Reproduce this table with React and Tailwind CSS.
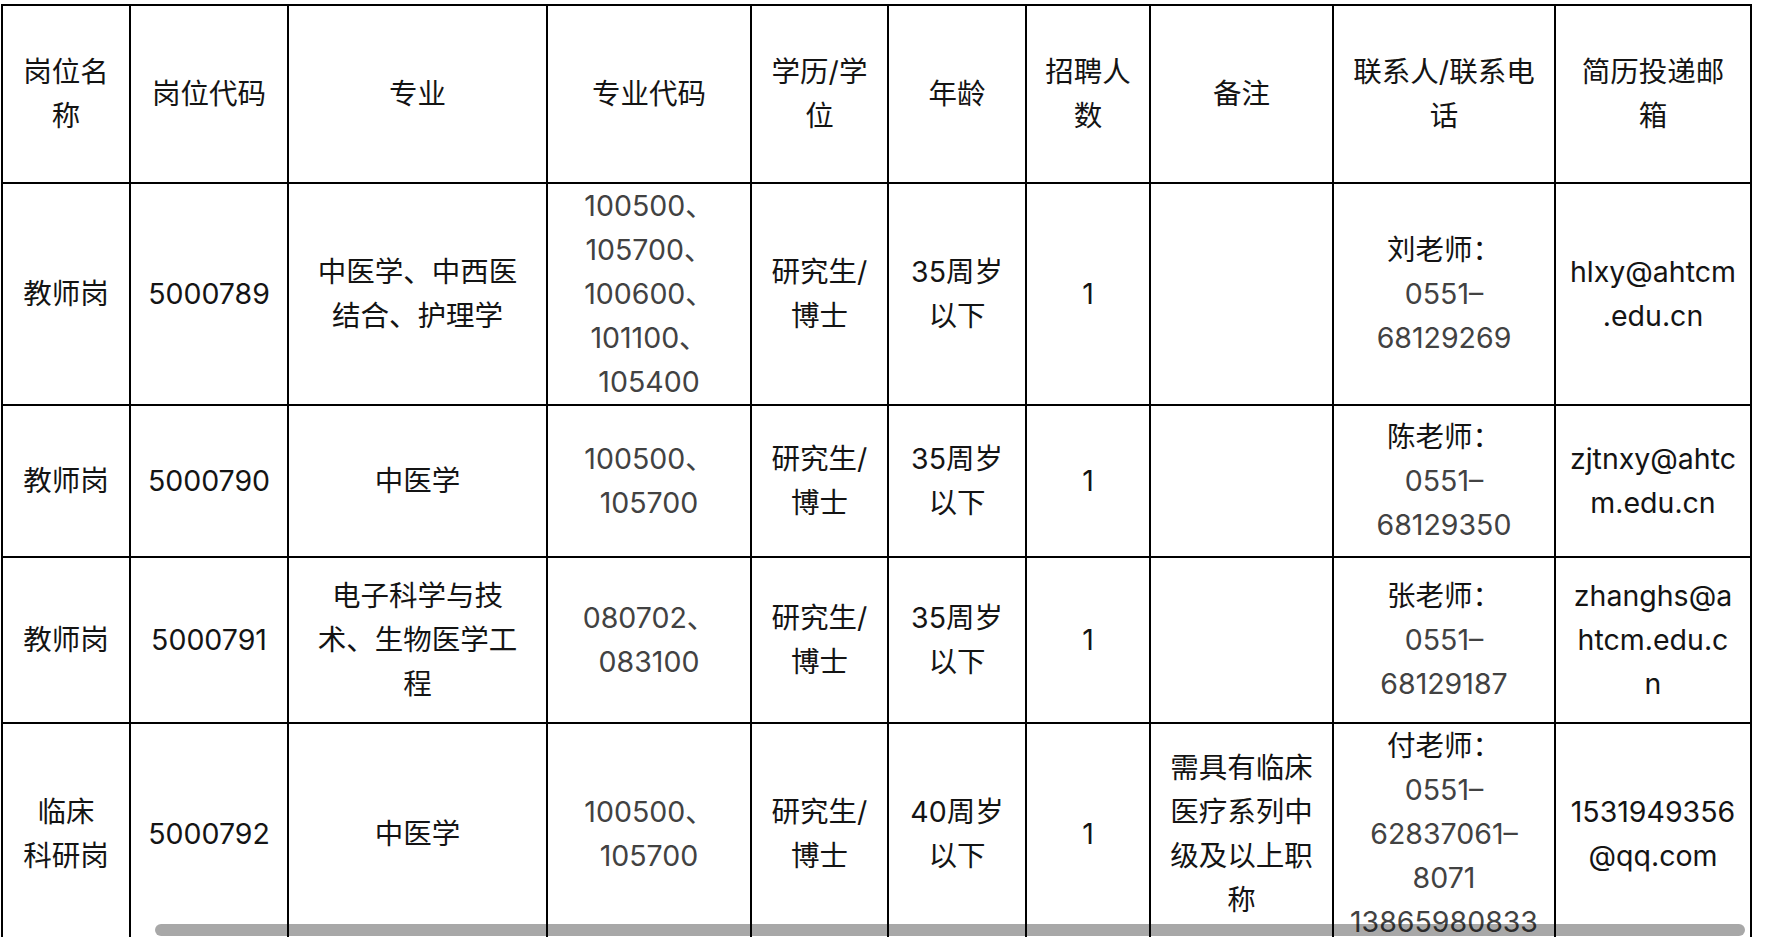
const columns = [128, 158, 259, 204, 137, 138, 124, 183, 222, 196]

const header = [
  ['岗位名', '称'],
  ['岗位代码'],
  ['专业'],
  ['专业代码'],
  ['学历/学', '位'],
  ['年龄'],
  ['招聘人', '数'],
  ['备注'],
  ['联系人/联系电', '话'],
  ['简历投递邮', '箱'],
]

// each cell: lines, plus which of them are the grey number lines
const rows = [
  {
    height: 221,
    cells: [
      { lines: ['教师岗'] },
      { lines: ['5000789'] },
      { lines: ['中医学、中西医', '结合、护理学'] },
      { lines: ['100500、', '105700、', '100600、', '101100、', '105400'], grey: true },
      { lines: ['研究生/', '博士'] },
      { lines: ['35周岁', '以下'] },
      { lines: ['1'] },
      { lines: [] },
      { lines: ['刘老师：', '0551–', '68129269'], greyFrom: 1 },
      { lines: ['hlxy@ahtcm', '.edu.cn'] },
    ],
  },
  {
    height: 152,
    cells: [
      { lines: ['教师岗'] },
      { lines: ['5000790'] },
      { lines: ['中医学'] },
      { lines: ['100500、', '105700'], grey: true },
      { lines: ['研究生/', '博士'] },
      { lines: ['35周岁', '以下'] },
      { lines: ['1'] },
      { lines: [] },
      { lines: ['陈老师：', '0551–', '68129350'], greyFrom: 1 },
      { lines: ['zjtnxy@ahtc', 'm.edu.cn'] },
    ],
  },
  {
    height: 166,
    cells: [
      { lines: ['教师岗'] },
      { lines: ['5000791'] },
      { lines: ['电子科学与技', '术、生物医学工', '程'] },
      { lines: ['080702、', '083100'], grey: true },
      { lines: ['研究生/', '博士'] },
      { lines: ['35周岁', '以下'] },
      { lines: ['1'] },
      { lines: [] },
      { lines: ['张老师：', '0551–', '68129187'], greyFrom: 1 },
      { lines: ['zhanghs@a', 'htcm.edu.c', 'n'] },
    ],
  },
  {
    height: 222,
    cells: [
      { lines: ['临床', '科研岗'] },
      { lines: ['5000792'] },
      { lines: ['中医学'] },
      { lines: ['100500、', '105700'], grey: true },
      { lines: ['研究生/', '博士'] },
      { lines: ['40周岁', '以下'] },
      { lines: ['1'] },
      { lines: ['需具有临床', '医疗系列中', '级及以上职', '称'] },
      { lines: ['付老师：', '0551–', '62837061–', '8071', '13865980833'], greyFrom: 1 },
      { lines: ['1531949356', '@qq.com'] },
    ],
  },
]

function Lines({ lines, grey, greyFrom }) {
  return lines.map((line, i) => {
    const isGrey = grey || (greyFrom !== undefined && i >= greyFrom)
    return (
      <div className={isGrey ? 'whitespace-nowrap text-[#424242]' : 'whitespace-nowrap'} key={i}>
        {line}
      </div>
    )
  })
}

export default function App() {
  return (
    <div className="relative min-h-screen bg-white pl-px pt-1 font-['Inter','Noto_Sans_CJK_SC',sans-serif] text-[28.5px] leading-[44px] text-[#141414]">
      <table className="table-fixed border-collapse">
        <colgroup>
          {columns.map((w, i) => (
            <col key={i} style={{ width: w }} />
          ))}
        </colgroup>
        <tbody>
          <tr>
            {header.map((lines, i) => (
              <td className="h-[178px] border-2 border-black p-0 text-center align-middle" key={i}>
                <Lines lines={lines} />
              </td>
            ))}
          </tr>
          {rows.map((row, r) => (
            <tr key={r}>
              {row.cells.map((cell, i) => (
                <td
                  className="border-2 border-black p-0 text-center align-middle"
                  key={i}
                  style={{ height: row.height }}
                >
                  <Lines {...cell} />
                </td>
              ))}
            </tr>
          ))}
        </tbody>
      </table>

      {/* horizontal scroll indicator */}
      <div className="fixed bottom-px left-[155px] h-3 w-[1590px] rounded-full bg-black/[0.34]" />
    </div>
  )
}
